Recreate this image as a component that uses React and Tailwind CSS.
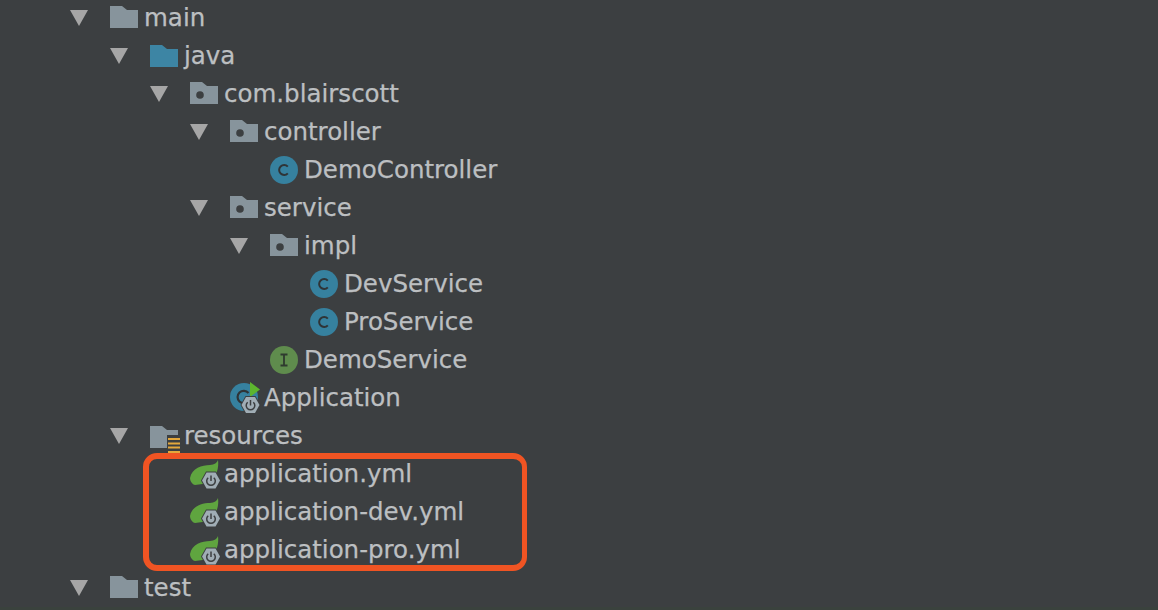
function Arrow() {
  return (
    <svg width="18" height="16" viewBox="0 0 18 16" className="block">
      <path d="M0 0H18L9 16Z" fill="#a6a6a6" />
    </svg>
  );
}

function Folder({ color = "#87949c", dot = false, lines = false, dy = 2 }) {
  return (
    <svg width="28" height="28" viewBox="0 0 28 28" className="block overflow-visible">
      <g transform={`translate(0 ${dy})`}>
        <path d="M0 0H12L17 4H28V22H0Z" fill={color} />
        {dot && <circle cx="10" cy="13" r="3.8" fill="#3c3f41" />}
        {lines && (
          <g>
            <rect x="17" y="9" width="15" height="20" fill="#3c3f41" />
            <rect x="18" y="12" width="12" height="2" fill="#e4a83c" />
            <rect x="18" y="16.500" width="12" height="2" fill="#e4a83c" />
            <rect x="18" y="20.500" width="12" height="2" fill="#e4a83c" />
            <rect x="18" y="25" width="12" height="2" fill="#e4a83c" />
          </g>
        )}
      </g>
    </svg>
  );
}

function ClassIcon() {
  return (
    <svg width="28" height="28" viewBox="0 0 28 28" className="block">
      <circle cx="14" cy="14" r="14" fill="#36819f" />
      <path d="M17.8 10.600A5 5 0 1 0 17.800 17.400" fill="none" stroke="#2f3437" strokeWidth="2" />
    </svg>
  );
}

function InterfaceIcon() {
  return (
    <svg width="28" height="28" viewBox="0 0 28 28" className="block">
      <circle cx="14" cy="14" r="14" fill="#5f8c4d" />
      <path d="M10.500 8.500H17.500M14 8.500V19.500M10.500 19.500H17.500" fill="none" stroke="#2f3a2f" strokeWidth="1.800" />
    </svg>
  );
}

function Hex({ cx, cy }) {
  return (
    <g transform={`translate(${cx} ${cy})`}>
      <path d="M-5 -9H5L10 0L5 9H-5L-10 0Z" fill="#3c3f41" />
      <path d="M-4.500 -8H4.500L9 0L4.500 8H-4.500L-9 0Z" fill="#a0adb5" />
      <path d="M-2.800 -2.800A4.300 4.300 0 1 0 2.800 -2.800" fill="none" stroke="#3c3f41" strokeWidth="1.500" />
      <path d="M0 -5V0.500" fill="none" stroke="#3c3f41" strokeWidth="1.500" />
    </g>
  );
}

function SpringIcon() {
  return (
    <svg width="32" height="28" viewBox="0 0 32 28" className="block overflow-visible">
      <path d="M28 0C27 3 24.500 4.500 20 5C12 5 2 8 0 18C0 21 1.500 23 3.500 24.500L5 25L20 23C27 15 29 8 28 0Z" fill="#5fa53f" />
      <Hex cx={21} cy={20.500} />
    </svg>
  );
}

function AppIcon() {
  return (
    <svg width="32" height="30" viewBox="0 0 32 30" className="block overflow-visible">
      <circle cx="14" cy="14" r="14" fill="#36819f" />
      <path d="M18.500 10A6.200 6.200 0 1 0 18.500 18" fill="none" stroke="#2f3437" strokeWidth="2.200" />
      <path d="M20 -1L30 6.500L20 14Z" fill="#5db52e" />
      <Hex cx={20.500} cy={22} />
    </svg>
  );
}

const ROWS = [
  { depth: 0, arrow: true, icon: <Folder />, label: "main" },
  { depth: 1, arrow: true, icon: <Folder color="#3d85a4" dy={3} />, label: "java" },
  { depth: 2, arrow: true, icon: <Folder dot />, label: "com.blairscott" },
  { depth: 3, arrow: true, icon: <Folder dot />, label: "controller" },
  { depth: 4, icon: <ClassIcon />, label: "DemoController" },
  { depth: 3, arrow: true, icon: <Folder dot />, label: "service" },
  { depth: 4, arrow: true, icon: <Folder dot />, label: "impl" },
  { depth: 5, icon: <ClassIcon />, label: "DevService" },
  { depth: 5, icon: <ClassIcon />, label: "ProService" },
  { depth: 4, icon: <InterfaceIcon />, label: "DemoService" },
  { depth: 3, icon: <AppIcon />, label: "Application" },
  { depth: 1, arrow: true, icon: <Folder lines dy={4} />, label: "resources" },
  { depth: 2, icon: <SpringIcon />, label: "application.yml" },
  { depth: 2, icon: <SpringIcon />, label: "application-dev.yml" },
  { depth: 2, icon: <SpringIcon />, label: "application-pro.yml" },
  { depth: 0, arrow: true, icon: <Folder />, label: "test" },
];

const INDENT = ["pl-[70px]", "pl-[110px]", "pl-[150px]", "pl-[190px]", "pl-[230px]", "pl-[270px]"];
const NO_ARROW_INDENT = ["pl-[110px]", "pl-[150px]", "pl-[190px]", "pl-[230px]", "pl-[270px]", "pl-[310px]"];

function Row({ depth, arrow, icon, label }) {
  return (
    <div className={`flex h-[38px] items-center ${arrow ? INDENT[depth] : NO_ARROW_INDENT[depth]}`}>
      {arrow && (
        <div className="mr-[22px] shrink-0">
          <Arrow />
        </div>
      )}
      <div className="mr-[6px] w-[28px] shrink-0">{icon}</div>
      <span className="whitespace-pre text-[24.500px] leading-[38px] text-[#bcbfc1] [-webkit-text-stroke:0.25px_#bcbfc1] [font-family:'DejaVu_Sans',sans-serif]">
        {label}
      </span>
    </div>
  );
}

export default function App() {
  return (
    <div className="relative flex h-[610px] w-[1158px] flex-col overflow-hidden bg-[#3c3f41]">
      <div className="-mt-px flex min-h-0 flex-1 flex-col">
        {ROWS.map((row) => (
          <Row key={row.label} {...row} />
        ))}
      </div>
      <div className="relative h-[3px] shrink-0 bg-[#3a423d]" />
      <div className="absolute left-[143px] top-[453px] h-[118px] w-[384px] rounded-[14px] border-[6px] border-r-[5px] border-[#f05423]" />
    </div>
  );
}
